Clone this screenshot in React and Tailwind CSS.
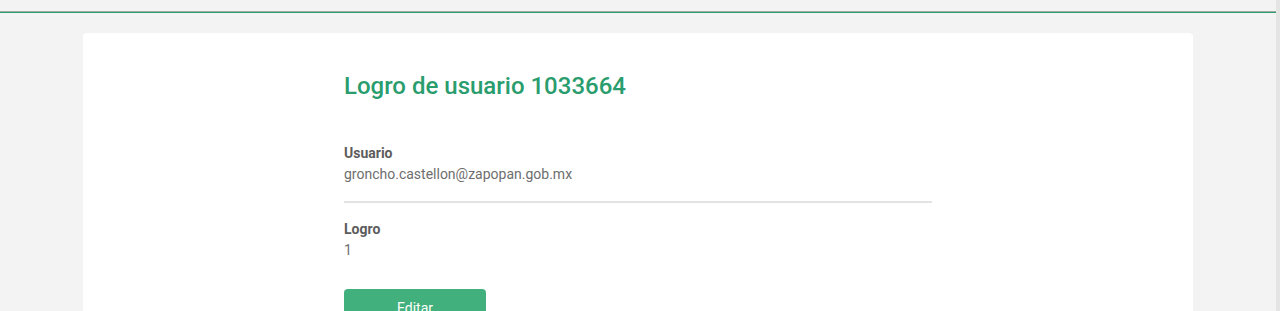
import React from 'react';

const fields = [
  { label: 'Usuario', value: 'groncho.castellon@zapopan.gob.mx' },
  { label: 'Logro', value: '1' },
];

function Field({ label, value }) {
  return (
    <div>
      <div className="text-[14px] leading-5 font-bold text-[#5c5c5c]">{label}</div>
      <div className="mt-px text-[14px] leading-5 text-[#6e6e6e]">{value}</div>
    </div>
  );
}

export default function App() {
  return (
    <div className="flex h-[311px] overflow-hidden bg-[#f3f3f3] font-['Roboto',sans-serif]">
      <div className="flex-1 flex flex-col">
        {/* Header strip */}
        <div className="h-[11px] shrink-0" />
        <div className="h-px shrink-0 bg-[#a3aaa6]" />
        <div className="h-px shrink-0 bg-[#2a9d6e]" />

        <main className="pt-5 shrink-0">
          <div className="mx-auto w-[1110px] bg-white rounded-[4px] pt-[38px] pb-10 min-h-[400px]">
            <div className="mx-auto w-[588px]">
              <h1 className="text-[24px] leading-[30px] font-medium text-[#2a9d6e]">
                Logro de usuario 1033664
              </h1>

              <div className="mt-[42px]">
                <Field {...fields[0]} />
              </div>

              <div className="mt-[17px] h-[2px] bg-[#e3e3e3]" />

              <div className="mt-4">
                <Field {...fields[1]} />
              </div>

              <button className="mt-[29px] w-[142px] h-[38px] rounded-[4px] bg-[#41b07c] text-white text-[14px] flex items-center justify-center">
                Editar
              </button>
            </div>
          </div>
        </main>
      </div>
      {/* scrollbar edge */}
      <div className="w-[4px] bg-[#e4e4e4]" />
    </div>
  );
}
